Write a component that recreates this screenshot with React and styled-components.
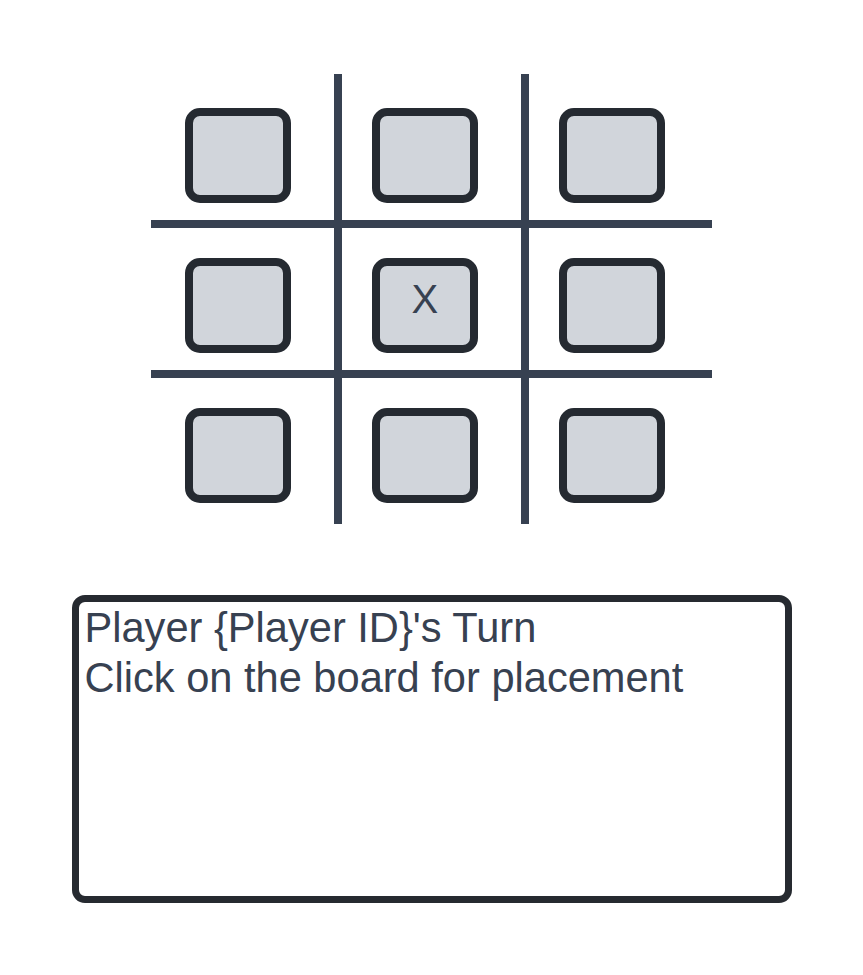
import React from "react";
import styled, { createGlobalStyle } from "styled-components";

const GlobalStyle = createGlobalStyle`
  html, body {
    margin: 0;
    padding: 0;
    background: #ffffff;
    font-family: "Liberation Sans", Arial, sans-serif;
  }
  *, *::before, *::after { box-sizing: border-box; }
`;

const Page = styled.main`
  display: flex;
  flex-direction: column;
  align-items: center;
  padding-top: 74px;
  gap: 71px;
`;

const Board = styled.div`
  display: grid;
  grid-template-columns: repeat(3, 187.33px);
  grid-template-rows: repeat(3, 150px);
  width: 562px;
`;

const LINE = "4px solid #374151";

const Cell = styled.div`
  display: flex;
  align-items: flex-start;
  justify-content: flex-start;
  border-top: ${(p) => (p.$row > 0 ? LINE : "none")};
  border-bottom: ${(p) => (p.$row < 2 ? LINE : "none")};
  border-left: ${(p) => (p.$col > 0 ? LINE : "none")};
  border-right: ${(p) => (p.$col < 2 ? LINE : "none")};
  padding-top: ${(p) => (p.$row > 0 ? 30 : 34)}px;
  padding-left: ${(p) => (p.$col > 0 ? 30 : 34)}px;
`;

const Tile = styled.button`
  width: 106px;
  height: 95px;
  border: 8px solid #252a31;
  border-radius: 15px;
  background: #d1d5db;
  padding: 0 0 13px 0;
  margin: 0;
  display: flex;
  align-items: center;
  justify-content: center;
  font-family: "Liberation Sans", Arial, sans-serif;
  font-size: 40px;
  color: #374151;
  cursor: pointer;
`;

const MessageBox = styled.section`
  width: 720px;
  height: 308px;
  border: 7px solid #262a30;
  border-radius: 13px;
  padding: 1px 6px;
  color: #374151;
  font-size: 41.6px;
  line-height: 50px;
`;

const Line = styled.div`
  white-space: nowrap;
`;

const board = [
  ["", "", ""],
  ["", "X", ""],
  ["", "", ""],
];

export default function App() {
  return (
    <>
      <GlobalStyle />
      <Page>
        <Board>
          {board.map((row, r) =>
            row.map((v, c) => (
              <Cell key={`${r}-${c}`} $row={r} $col={c}>
                <Tile type="button">{v}</Tile>
              </Cell>
            ))
          )}
        </Board>
        <MessageBox>
          <Line>Player {"{Player ID}"}'s Turn</Line>
          <Line>Click on the board for placement</Line>
        </MessageBox>
      </Page>
    </>
  );
}
